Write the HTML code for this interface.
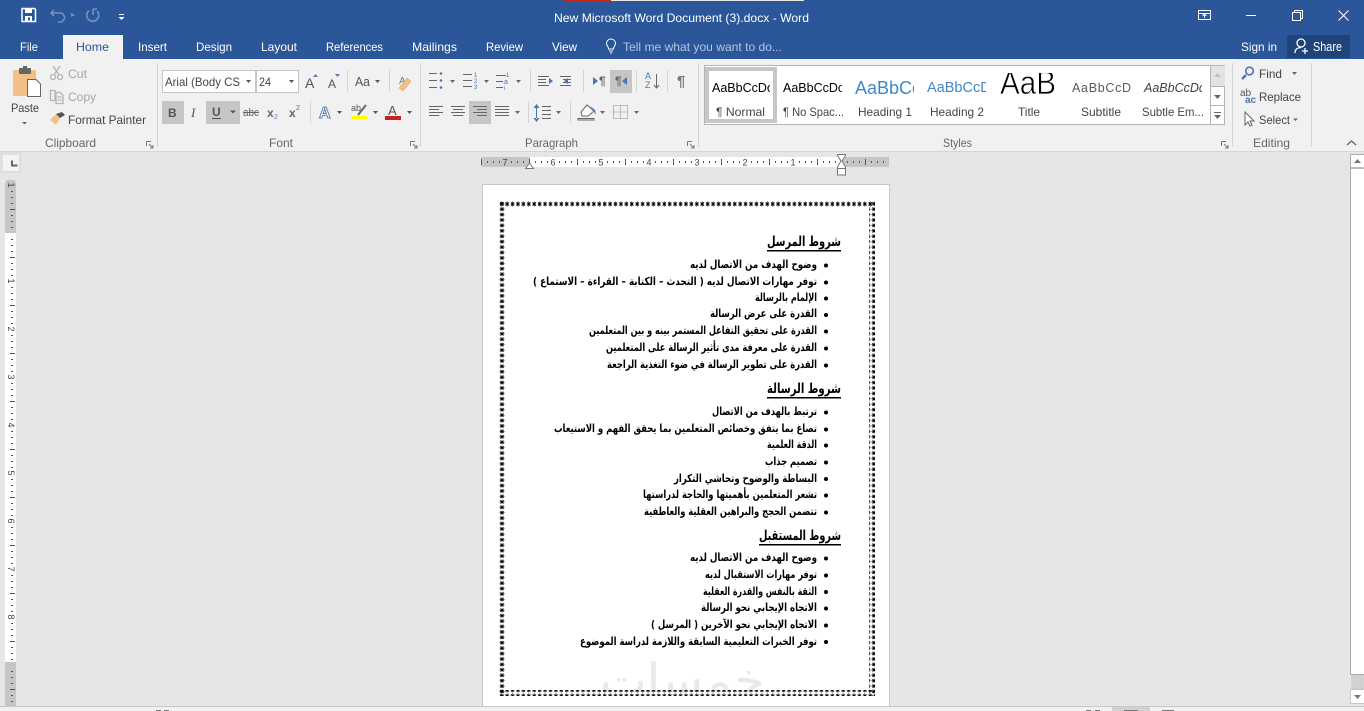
<!DOCTYPE html>
<html lang="en"><head><meta charset="utf-8"><title>New Microsoft Word Document (3).docx - Word</title>
<style>
html,body{margin:0;padding:0;background:#e6e6e6;overflow:hidden}
svg{display:block;position:absolute;left:0;top:0}
text{font-family:"Liberation Sans","DejaVu Sans",sans-serif;font-size:12px;fill:#444;white-space:pre}
.w{fill:#fff}
.g{fill:#a5a5a5}
.s{fill:#666;font-size:12px}
.ar{font-family:"DejaVu Sans","Liberation Sans",sans-serif;font-size:11px;font-weight:bold;fill:#000;direction:rtl}
.h{font-family:"DejaVu Sans","Liberation Sans",sans-serif;font-size:14px;font-weight:bold;fill:#000;direction:rtl}
.r{font-size:9px;fill:#444}
</style></head><body>
<svg width="1364" height="711" viewBox="0 0 1364 711" xmlns="http://www.w3.org/2000/svg">
<defs>
<pattern id="hr" x="793" y="157" width="48" height="10" patternUnits="userSpaceOnUse">
<g fill="#555"><rect x="6" y="4" width="1" height="2"/><rect x="12" y="4" width="1" height="2"/><rect x="18" y="4" width="1" height="2"/><rect x="24" y="2" width="1" height="6"/><rect x="30" y="4" width="1" height="2"/><rect x="36" y="4" width="1" height="2"/><rect x="42" y="4" width="1" height="2"/></g>
</pattern>
<pattern id="vr" x="5" y="233" width="11" height="48" patternUnits="userSpaceOnUse">
<g fill="#555"><rect x="6" y="6" width="2" height="1"/><rect x="6" y="12" width="2" height="1"/><rect x="6" y="18" width="2" height="1"/><rect x="5" y="24" width="5" height="1"/><rect x="6" y="30" width="2" height="1"/><rect x="6" y="36" width="2" height="1"/><rect x="6" y="42" width="2" height="1"/></g>
</pattern>
<pattern id="sx" x="499" y="201" width="5.42" height="6" patternUnits="userSpaceOnUse">
<path d="M2.700 .5V5.500M.8 3H4.600M1.100 1.200L4.300 4.800M4.300 1.200L1.100 4.800" stroke="#000" stroke-width=".75" fill="none"/>
</pattern>
<pattern id="sy" x="499" y="201" width="6" height="5.42" patternUnits="userSpaceOnUse">
<path d="M3 .7V4.700M.5 2.700H5.500M1.200 1.100L4.800 4.300M4.800 1.100L1.200 4.300" stroke="#000" stroke-width=".75" fill="none"/>
</pattern>
<pattern id="dots" width="2" height="2" patternUnits="userSpaceOnUse"><rect width="2" height="2" fill="#d4d4d4"/><rect width="1" height="1" fill="#c8c8c8"/></pattern>
<clipPath id="c1"><rect x="710" y="74" width="60" height="30"/></clipPath>
<clipPath id="c2"><rect x="782" y="74" width="60" height="30"/></clipPath>
<clipPath id="c3"><rect x="855" y="74" width="59" height="30"/></clipPath>
<clipPath id="c4"><rect x="927" y="74" width="59" height="30"/></clipPath>
<clipPath id="c5"><rect x="995" y="73" width="66" height="30"/></clipPath>
<clipPath id="c6"><rect x="1071" y="74" width="60" height="30"/></clipPath>
<clipPath id="c7"><rect x="1143" y="74" width="59" height="30"/></clipPath>
<clipPath id="wm"><rect x="590" y="655" width="190" height="37"/></clipPath>
</defs>

<!-- backgrounds -->
<rect width="1364" height="711" fill="#e6e6e6"/>
<rect width="1364" height="59" fill="#2b579a"/>
<rect y="59" width="1364" height="92" fill="#f1f1f1"/>
<rect y="151" width="1364" height="1" fill="#d4d4d4"/>
<rect x="563" y="0" width="48" height="1" fill="#c8281c"/>
<rect x="611" y="0" width="193" height="1" fill="#e8e8e8"/>

<!-- quick access -->
<g fill="none">
<path d="M22 8.500H34.500L35.500 9.500V21.500H22Z" stroke="#fff" stroke-width="1.500"/>
<rect x="25" y="8" width="7" height="5" fill="#fff"/><rect x="25" y="16" width="7" height="5.500" fill="#fff"/><rect x="28" y="17.500" width="2" height="3" fill="#2b579a"/>
<path d="M54 10L51 13L54 16M51.500 13H60A4.500 4.500 0 0 1 60 22H58" stroke="#7893bd" stroke-width="1.500"/>
<path d="M71 13L75 15L71 17Z" fill="#7893bd"/>
<path d="M89 10.500A6 6 0 1 0 97 11M93 9V15M93 9H97" stroke="#7893bd" stroke-width="1.600"/>
<path d="M119 14.500H124" stroke="#fff"/><path d="M118.500 17H124.500L121.500 20Z" fill="#fff"/>
</g>

<text class="w" x="554" y="22" textLength="255" lengthAdjust="spacingAndGlyphs">New Microsoft Word Document (3).docx - Word</text>

<!-- window buttons -->
<g fill="none" stroke="#fff">
<rect x="1198.500" y="10.500" width="12" height="9"/><path d="M1198.500 13.500H1210.500M1204.500 18V14.500M1202.500 16L1204.500 14L1206.500 16"/>
<path d="M1246 15.500H1256"/>
<rect x="1292.500" y="12.500" width="8" height="8"/><path d="M1294.500 12.500V10.500H1302.500V18.500H1300.500"/>
<path d="M1338.500 10.500L1348.500 20.500M1348.500 10.500L1338.500 20.500"/>
</g>

<!-- tabs -->
<rect x="63" y="35" width="60" height="24" fill="#f1f1f1"/>
<text class="w" x="20" y="51" textLength="18" lengthAdjust="spacingAndGlyphs">File</text>
<text x="76" y="51" textLength="33" lengthAdjust="spacingAndGlyphs" style="fill:#2b579a">Home</text>
<text class="w" x="138" y="51" textLength="29" lengthAdjust="spacingAndGlyphs">Insert</text>
<text class="w" x="196" y="51" textLength="36" lengthAdjust="spacingAndGlyphs">Design</text>
<text class="w" x="261" y="51" textLength="36" lengthAdjust="spacingAndGlyphs">Layout</text>
<text class="w" x="326" y="51" textLength="57" lengthAdjust="spacingAndGlyphs">References</text>
<text class="w" x="412" y="51" textLength="45" lengthAdjust="spacingAndGlyphs">Mailings</text>
<text class="w" x="486" y="51" textLength="37" lengthAdjust="spacingAndGlyphs">Review</text>
<text class="w" x="552" y="51" textLength="25" lengthAdjust="spacingAndGlyphs">View</text>
<path d="M608.500 49C608.500 46 606.500 46 606.500 43.500A4.500 4.500 0 0 1 615.500 43.500C615.500 46 613.500 46 613.500 49ZM609 51H613M610 53H612" fill="none" stroke="#fff"/>
<text x="623" y="51" textLength="159" lengthAdjust="spacingAndGlyphs" style="fill:#b4c6e0">Tell me what you want to do...</text>
<text class="w" x="1241" y="51" textLength="36" lengthAdjust="spacingAndGlyphs">Sign in</text>
<rect x="1287" y="35" width="63" height="23" fill="#1f4479"/>
<circle cx="1301" cy="43" r="4" fill="none" stroke="#fff" stroke-width="1.300"/>
<path d="M1295 53C1295 49 1298 47.500 1301 47.500M1302 51H1308M1305 48V54" fill="none" stroke="#fff" stroke-width="1.300"/>
<text class="w" x="1313" y="51" textLength="29" lengthAdjust="spacingAndGlyphs" style="font-size:13px">Share</text>

<!-- group separators -->
<g fill="#d4d4d4">
<rect x="157" y="63" width="1" height="84"/><rect x="420" y="63" width="1" height="84"/><rect x="698" y="63" width="1" height="84"/><rect x="1232" y="63" width="1" height="84"/><rect x="1311" y="63" width="1" height="84"/>
</g>

<!-- clipboard -->
<rect x="13" y="70" width="23" height="26" rx="1" fill="#f2bf84"/>
<rect x="19" y="68" width="12" height="6" rx="1" fill="#666"/><rect x="23" y="66" width="4" height="4" fill="#666"/>
<path d="M27.500 79.500H36L40.500 84V96.500H27.500Z" fill="#fff" stroke="#666"/>
<text x="11" y="112" textLength="28" lengthAdjust="spacingAndGlyphs">Paste</text>
<path d="M22 122H27L24.500 124.500Z" fill="#666"/>
<g fill="none" stroke="#b3b3b3" stroke-width="1.300"><circle cx="53" cy="77" r="2.500"/><circle cx="60" cy="77" r="2.500"/><path d="M54 75L60 66M59 75L53 66"/>
<path d="M50.500 90.500H55V100.500H50.500ZM56 92.500H60L63 95V103.500H56ZM57.500 97H61.500M57.500 100H61.500"/></g>
<text x="68" y="78" textLength="19" lengthAdjust="spacingAndGlyphs" class="g">Cut</text>
<text x="68" y="101" textLength="28" lengthAdjust="spacingAndGlyphs" class="g">Copy</text>
<path d="M50 120L56 114L60 118L56 125Z" fill="#f2bf84"/><path d="M56 114L62 112L65 115L60 118Z" fill="#555"/>
<text x="68" y="124" textLength="78" lengthAdjust="spacingAndGlyphs">Format Painter</text>
<text class="s" x="45" y="147" textLength="51" lengthAdjust="spacingAndGlyphs">Clipboard</text>
<path d="M146.500 141.500H151M146.500 141.500V146M149 144L153 148M153 145V148H150" fill="none" stroke="#777"/>

<!-- font -->
<rect x="162.500" y="70.500" width="93" height="22" fill="#fff" stroke="#c6c6c6"/>
<rect x="256.500" y="70.500" width="42" height="22" fill="#fff" stroke="#c6c6c6"/>
<text x="165" y="86" textLength="75" lengthAdjust="spacingAndGlyphs">Arial (Body CS</text>
<text x="259" y="86" textLength="12" lengthAdjust="spacingAndGlyphs">24</text>
<path d="M246 80H251L248.500 83ZM289 80H294L291.500 83Z" fill="#555"/>
<text x="305" y="88" style="font-size:14px;fill:#555">A</text><path d="M313 77H318L315.500 74Z" fill="#5b7fb5"/>
<text x="328" y="88" style="font-size:12px;fill:#555">A</text><path d="M335 74H340L337.500 77Z" fill="#5b7fb5"/>
<rect x="347" y="70" width="1" height="22" fill="#d4d4d4"/>
<text x="355" y="86" textLength="15" lengthAdjust="spacingAndGlyphs" style="font-size:13px;fill:#555">Aa</text>
<path d="M375 80H380L377.500 83Z" fill="#555"/>
<rect x="389" y="70" width="1" height="22" fill="#d4d4d4"/>
<text x="399" y="84" style="font-size:10px;fill:#777">A</text>
<path d="M399 88L407 78L411 81L403 91Z" fill="#f2bf84" stroke="#c89a66" stroke-width=".5"/>
<rect x="162" y="101" width="22" height="23" fill="#c6c6c6"/>
<rect x="206" y="101" width="34" height="23" fill="#c6c6c6"/>
<text x="168" y="117" style="font-weight:bold;font-size:12px;fill:#555">B</text>
<text x="191" y="117" style="font-style:italic;font-family:'Liberation Serif',serif;font-size:13px;fill:#555">I</text>
<text x="212" y="116" style="font-size:12px;font-weight:bold;fill:#555">U</text><rect x="212" y="118" width="9" height="1" fill="#555"/>
<path d="M230 110.500H236L233 113.500Z" fill="#555"/>
<text x="243" y="116" textLength="16" lengthAdjust="spacingAndGlyphs" style="font-size:11px;fill:#666">abc</text><rect x="243" y="112" width="16" height="1" fill="#666"/>
<text x="267" y="117" style="font-weight:bold;font-size:12px;fill:#666">x</text><text x="274" y="119" style="font-size:7px;fill:#5b7fb5">2</text>
<text x="289" y="117" style="font-weight:bold;font-size:12px;fill:#666">x</text><text x="296" y="110" style="font-size:7px;fill:#666">2</text>
<rect x="310" y="101" width="1" height="22" fill="#d4d4d4"/>
<text x="319" y="118" style="font-weight:bold;font-size:16px;fill:#fff;stroke:#5b7fb5;stroke-width:1">A</text>
<path d="M337 111H342L339.500 114Z" fill="#555"/>
<text x="351" y="111" style="font-size:9px;fill:#555">ab</text><path d="M358 115L366 105" stroke="#666" stroke-width="2"/>
<rect x="351" y="116" width="16" height="3" fill="#ff0"/>
<path d="M373 111H378L375.500 114Z" fill="#555"/>
<text x="388" y="115" style="font-size:13px;fill:#555">A</text><rect x="385" y="116" width="16" height="4" fill="#c8221a"/>
<path d="M407 111H412L409.500 114Z" fill="#555"/>
<text class="s" x="269" y="147" textLength="24" lengthAdjust="spacingAndGlyphs">Font</text>
<path d="M410.500 141.500H415M410.500 141.500V146M413 144L417 148M417 145V148H414" fill="none" stroke="#777"/>

<!-- paragraph -->
<rect x="610" y="70" width="22" height="23" fill="#c6c6c6"/>
<rect x="469" y="101" width="22" height="23" fill="#c6c6c6"/>
<g fill="none" stroke="#666">
<path d="M429 73.500H437M429 80.500H437M429 87.500H437"/>
<path d="M463 74.500H472M463 80.500H472M463 86.500H472"/>
<path d="M496 75.500H506M496 81.500H503M496 87.500H503"/>
<path d="M538 76.500H549M538 79.500H546M538 82.500H546M538 85.500H549"/>
<path d="M560 76.500H571M563 79.500H571M563 82.500H571M560 85.500H571"/>
<path d="M429 106.500H443M429 109.500H439M429 112.500H443M429 115.500H439"/>
<path d="M451 106.500H465M453 109.500H463M451 112.500H465M453 115.500H463"/>
<path d="M473 106.500H487M477 109.500H487M473 112.500H487M477 115.500H487"/>
<path d="M495 106.500H509M495 109.500H509M495 112.500H509M495 115.500H509"/>
<path d="M542 106.500H551M542 110.500H551M542 114.500H551M542 118.500H551"/>
<path d="M578 118.500H594V120H578Z"/>
<path d="M613.500 105.500H627.500V118.500H613.500ZM620.500 105.500V118.500M613.500 112H627.500" stroke="#888" stroke-dasharray="1 1"/>
</g>
<path d="M450 80H455L452.500 83ZM484 80H489L486.500 83ZM516 80H521L518.500 83ZM515 111H520L517.500 114ZM556 111H561L558.500 114ZM600 111H605L602.500 114ZM634 111H639L636.500 114Z" fill="#666"/>
<g fill="#4a74b2">
<circle cx="441" cy="73.500" r="1.300"/><circle cx="441" cy="80.500" r="1.300"/><circle cx="441" cy="87.500" r="1.300"/>
<path d="M549 78L553 81L549 84ZM564 81L568 78V84Z"/>
<path d="M593 77L598 81L593 85ZM622 81L627 77V85Z"/>
<path d="M536.500 104L539.500 108H533.500ZM536.500 122L539.500 118H533.500ZM536 107H537V119H536Z"/>
</g>
<text x="474" y="77" style="font-size:6px;fill:#4a74b2">1</text><text x="474" y="83" style="font-size:6px;fill:#4a74b2">2</text><text x="474" y="89" style="font-size:6px;fill:#4a74b2">3</text>
<text x="506" y="77" style="font-size:6px;fill:#4a74b2">1</text><text x="504" y="84" style="font-size:7px;fill:#4a74b2">a</text><text x="504" y="90" style="font-size:6px;fill:#4a74b2">i</text>
<text x="599" y="85" style="font-size:12px;font-weight:bold;fill:#666">¶</text>
<text x="615" y="85" style="font-size:12px;font-weight:bold;fill:#666">¶</text>
<text x="645" y="79" style="font-size:9px;fill:#4a74b2">A</text><text x="645" y="88" style="font-size:9px;fill:#777">Z</text>
<path d="M656.500 74V88M654 85L656.500 88L659 85" fill="none" stroke="#666"/>
<text x="677" y="86" style="font-size:15px;font-weight:bold;fill:#777">¶</text>
<g fill="#d4d4d4"><rect x="530" y="70" width="1" height="22"/><rect x="583" y="70" width="1" height="22"/><rect x="636" y="70" width="1" height="22"/><rect x="667" y="70" width="1" height="22"/><rect x="528" y="101" width="1" height="22"/><rect x="570" y="101" width="1" height="22"/></g>
<path d="M581 112L587 105L594 111L588 116H582Z" fill="#fff" stroke="#666"/><path d="M590 106L595 110L596 115Z" fill="#4a74b2"/>
<text class="s" x="525" y="147" textLength="53" lengthAdjust="spacingAndGlyphs">Paragraph</text>
<path d="M687.500 141.500H692M687.500 141.500V146M690 144L694 148M694 145V148H691" fill="none" stroke="#777"/>

<!-- styles gallery -->
<rect x="704.500" y="65.500" width="520" height="59" fill="#fff" stroke="#b5b5b5"/>
<rect x="707" y="69" width="68" height="52" fill="#fff" stroke="#c6c6c6" stroke-width="4"/>
<g clip-path="url(#c1)"><text x="712" y="92" style="font-size:12.500px;fill:#000">AaBbCcDc</text></g>
<g clip-path="url(#c2)"><text x="783" y="92" style="font-size:12.500px;fill:#000">AaBbCcDc</text></g>
<g clip-path="url(#c3)"><text x="855" y="94" style="font-size:18px;fill:#3f88c8">AaBbCc</text></g>
<g clip-path="url(#c4)"><text x="927" y="92" style="font-size:14.500px;fill:#3f88c8">AaBbCcD</text></g>
<g clip-path="url(#c5)"><text x="1000" y="94" textLength="56" lengthAdjust="spacingAndGlyphs" style="font-size:33px;fill:#000;stroke:#fff;stroke-width:.7">AaB</text></g>
<g clip-path="url(#c6)"><text x="1072" y="92" style="font-size:12.500px;letter-spacing:.7px;fill:#5a5a5a">AaBbCcD</text></g>
<g clip-path="url(#c7)"><text x="1144" y="92" style="font-size:12.500px;font-style:italic;fill:#404040">AaBbCcDc</text></g>
<text x="716" y="116" textLength="49" lengthAdjust="spacingAndGlyphs">¶ Normal</text>
<text x="783" y="116" textLength="61" lengthAdjust="spacingAndGlyphs">¶ No Spac...</text>
<text x="858" y="116" textLength="54" lengthAdjust="spacingAndGlyphs">Heading 1</text>
<text x="930" y="116" textLength="54" lengthAdjust="spacingAndGlyphs">Heading 2</text>
<text x="1018" y="116" textLength="22" lengthAdjust="spacingAndGlyphs">Title</text>
<text x="1081" y="116" textLength="40" lengthAdjust="spacingAndGlyphs">Subtitle</text>
<text x="1142" y="116" textLength="62" lengthAdjust="spacingAndGlyphs">Subtle Em...</text>
<rect x="1210.500" y="65.500" width="14" height="59" fill="#fff" stroke="#b5b5b5"/>
<rect x="1211" y="66" width="14" height="20" fill="#e3e3e3"/>
<path d="M1210.500 86.500H1224.500M1210.500 105.500H1224.500" stroke="#b5b5b5"/>
<path d="M1214 77H1221L1217.500 73Z" fill="#c0c0c0"/>
<path d="M1214 95H1221L1217.500 99Z" fill="#666"/>
<path d="M1214 112.500H1221" stroke="#666"/><path d="M1214 115H1221L1217.500 119Z" fill="#666"/>
<text class="s" x="943" y="147" textLength="29" lengthAdjust="spacingAndGlyphs">Styles</text>
<path d="M1221.500 141.500H1226M1221.500 141.500V146M1224 144L1228 148M1228 145V148H1225" fill="none" stroke="#777"/>

<!-- editing -->
<circle cx="1249.500" cy="71" r="3.800" fill="none" stroke="#4a74b2" stroke-width="1.600"/>
<path d="M1246 75L1242 79" stroke="#4a74b2" stroke-width="2.400"/>
<text x="1259" y="78" textLength="23" lengthAdjust="spacingAndGlyphs">Find</text>
<path d="M1292 72H1297L1294.500 75Z" fill="#666"/>
<text x="1240" y="96" style="font-size:10px;fill:#555">ab</text><text x="1245" y="103" style="font-size:10px;font-weight:bold;fill:#4a74b2">ac</text>
<text x="1259" y="101" textLength="42" lengthAdjust="spacingAndGlyphs">Replace</text>
<path d="M1245 112V125L1248 122L1250 126L1252 125L1250 121H1254Z" fill="#fff" stroke="#666"/>
<text x="1259" y="124" textLength="31" lengthAdjust="spacingAndGlyphs">Select</text>
<path d="M1293 118.500H1298L1295.500 121Z" fill="#666"/>
<text class="s" x="1253" y="147" textLength="37" lengthAdjust="spacingAndGlyphs">Editing</text>
<path d="M1347 145L1351.500 141L1356 145" fill="none" stroke="#666" stroke-width="1.300"/>

<!-- horizontal ruler -->
<rect x="481" y="157" width="408" height="10" fill="#c6c6c6"/>
<rect x="530" y="157" width="311" height="10" fill="#fff"/>
<rect x="481" y="157" width="408" height="10" fill="url(#hr)"/>
<rect x="501" y="158" width="8" height="8" fill="#c6c6c6"/><rect x="549" y="158" width="8" height="8" fill="#fff"/><rect x="597" y="158" width="8" height="8" fill="#fff"/><rect x="645" y="158" width="8" height="8" fill="#fff"/><rect x="693" y="158" width="8" height="8" fill="#fff"/><rect x="741" y="158" width="8" height="8" fill="#fff"/><rect x="789" y="158" width="8" height="8" fill="#fff"/>
<text class="r" x="505" y="165.500" text-anchor="middle">7</text><text class="r" x="553" y="165.500" text-anchor="middle">6</text><text class="r" x="601" y="165.500" text-anchor="middle">5</text><text class="r" x="649" y="165.500" text-anchor="middle">4</text><text class="r" x="697" y="165.500" text-anchor="middle">3</text><text class="r" x="745" y="165.500" text-anchor="middle">2</text><text class="r" x="793" y="165.500" text-anchor="middle">1</text>
<path d="M525.500 168.500L529.500 163L533.500 168.500Z" fill="#fff" stroke="#777"/>
<path d="M837.500 154.500H845.500V155.500L842 161L845.500 167V168.500H837.500V167L841 161L837.500 155.500Z" fill="#fff" stroke="#777"/>
<rect x="837.500" y="168.500" width="8" height="6.500" fill="#fff" stroke="#777"/>

<!-- ruler corner -->
<rect x="0" y="152" width="22" height="21" fill="#dfdfdf"/>
<rect x="3" y="155" width="16" height="16" fill="#f4f4f4"/>
<path d="M12 160.500V165.500H17.500" fill="none" stroke="#666" stroke-width="2"/>

<!-- vertical ruler -->
<rect x="5" y="182" width="11" height="524" fill="#c6c6c6"/>
<rect x="5" y="233" width="11" height="429" fill="#fff"/>
<rect x="5" y="182" width="11" height="524" fill="url(#vr)"/>
<rect x="6" y="180" width="9" height="8" fill="#c6c6c6"/>
<rect x="6" y="277" width="9" height="7" fill="#fff"/><rect x="6" y="325" width="9" height="7" fill="#fff"/><rect x="6" y="373" width="9" height="7" fill="#fff"/><rect x="6" y="421" width="9" height="7" fill="#fff"/><rect x="6" y="469" width="9" height="7" fill="#fff"/><rect x="6" y="517" width="9" height="7" fill="#fff"/><rect x="6" y="565" width="9" height="7" fill="#fff"/><rect x="6" y="613" width="9" height="7" fill="#fff"/>
<text class="r" text-anchor="middle" transform="translate(8,185) rotate(90)">1</text>
<text class="r" text-anchor="middle" transform="translate(8,281) rotate(90)">1</text>
<text class="r" text-anchor="middle" transform="translate(8,329) rotate(90)">2</text>
<text class="r" text-anchor="middle" transform="translate(8,377) rotate(90)">3</text>
<text class="r" text-anchor="middle" transform="translate(8,425) rotate(90)">4</text>
<text class="r" text-anchor="middle" transform="translate(8,473) rotate(90)">5</text>
<text class="r" text-anchor="middle" transform="translate(8,521) rotate(90)">6</text>
<text class="r" text-anchor="middle" transform="translate(8,569) rotate(90)">7</text>
<text class="r" text-anchor="middle" transform="translate(8,617) rotate(90)">8</text>

<!-- scrollbar -->
<rect x="1350.500" y="154.500" width="14" height="520" fill="#fff" stroke="#ababab"/>
<path d="M1354 163H1361L1357.500 159Z" fill="#777"/>
<rect x="1351" y="167" width="13" height="2" fill="#bdbdbd"/>
<rect x="1351" y="675" width="13" height="14" fill="url(#dots)"/>
<rect x="1350.500" y="689.500" width="14" height="14" fill="#fff" stroke="#c6c6c6"/>
<path d="M1354 695H1361L1357.500 699Z" fill="#777"/>

<!-- page -->
<rect x="482.500" y="184.500" width="407" height="530" fill="#fff" stroke="#c6c6c6"/>
<g clip-path="url(#wm)"><text x="765" y="696" textLength="165" lengthAdjust="spacingAndGlyphs" style="font-family:'DejaVu Sans',sans-serif;font-size:46px;fill:#e9e9e9;direction:rtl">خمسات</text></g>
<rect x="499" y="201" width="376" height="6" fill="url(#sx)"/>
<rect x="499" y="690" width="376" height="6" fill="url(#sx)"/>
<rect x="499" y="201" width="6" height="495" fill="url(#sy)"/>
<rect x="869" y="201" width="6" height="495" fill="url(#sy)"/>

<!-- doc text -->
<text class="h" x="841" y="246" textLength="74" lengthAdjust="spacingAndGlyphs">شروط المرسل</text><rect x="767" y="250" width="74" height="1.500" fill="#000"/>
<text class="ar" x="817" y="268" textLength="127" lengthAdjust="spacingAndGlyphs">وضوح الهدف من الاتصال لديه</text>
<text class="ar" x="817" y="285" textLength="284" lengthAdjust="spacingAndGlyphs">توفر مهارات الاتصال لديه ( التحدث – الكتابة – القراءة – الاستماع )</text>
<text class="ar" x="817" y="301" textLength="62" lengthAdjust="spacingAndGlyphs">الإلمام بالرسالة</text>
<text class="ar" x="817" y="317" textLength="107" lengthAdjust="spacingAndGlyphs">القدرة على عرض الرسالة</text>
<text class="ar" x="817" y="334" textLength="228" lengthAdjust="spacingAndGlyphs">القدرة على تحقيق التفاعل المستمر بينه و بين المتعلمين</text>
<text class="ar" x="817" y="351" textLength="211" lengthAdjust="spacingAndGlyphs">القدرة على معرفة مدى تأثير الرسالة على المتعلمين</text>
<text class="ar" x="817" y="368" textLength="210" lengthAdjust="spacingAndGlyphs">القدرة على تطوير الرسالة في ضوء التغذية الراجعة</text>

<text class="h" x="841" y="393" textLength="74" lengthAdjust="spacingAndGlyphs">شروط الرسالة</text><rect x="767" y="397" width="74" height="1.500" fill="#000"/>
<text class="ar" x="817" y="415" textLength="105" lengthAdjust="spacingAndGlyphs">ترتبط بالهدف من الاتصال</text>
<text class="ar" x="817" y="432" textLength="263" lengthAdjust="spacingAndGlyphs">تصاغ بما يتفق وخصائص المتعلمين بما يحقق الفهم و الاستيعاب</text>
<text class="ar" x="817" y="448" textLength="50" lengthAdjust="spacingAndGlyphs">الدقة العلمية</text>
<text class="ar" x="817" y="465" textLength="52" lengthAdjust="spacingAndGlyphs">تصميم جذاب</text>
<text class="ar" x="817" y="482" textLength="143" lengthAdjust="spacingAndGlyphs">البساطة والوضوح وتحاشي التكرار</text>
<text class="ar" x="817" y="498" textLength="174" lengthAdjust="spacingAndGlyphs">تشعر المتعلمين بأهميتها والحاجة لدراستها</text>
<text class="ar" x="817" y="515" textLength="173" lengthAdjust="spacingAndGlyphs">تتضمن الحجج والبراهين العقلية والعاطفية</text>

<text class="h" x="841" y="540" textLength="82" lengthAdjust="spacingAndGlyphs">شروط المستقبل</text><rect x="759" y="544" width="82" height="1.500" fill="#000"/>
<text class="ar" x="817" y="561" textLength="127" lengthAdjust="spacingAndGlyphs">وضوح الهدف من الاتصال لديه</text>
<text class="ar" x="817" y="578" textLength="112" lengthAdjust="spacingAndGlyphs">توفر مهارات الاستقبال لديه</text>
<text class="ar" x="817" y="595" textLength="114" lengthAdjust="spacingAndGlyphs">الثقة بالنفس والقدرة العقلية</text>
<text class="ar" x="817" y="611" textLength="116" lengthAdjust="spacingAndGlyphs">الاتجاه الإيجابي نحو الرسالة</text>
<text class="ar" x="817" y="628" textLength="166" lengthAdjust="spacingAndGlyphs">الاتجاه الإيجابي نحو الآخرين ( المرسل )</text>
<text class="ar" x="817" y="645" textLength="237" lengthAdjust="spacingAndGlyphs">توفر الخبرات التعليمية السابقة واللازمة لدراسة الموضوع</text>

<g fill="#000">
<circle cx="826" cy="265.500" r="2"/><circle cx="826" cy="282.500" r="2"/><circle cx="826" cy="298.500" r="2"/><circle cx="826" cy="315" r="2"/><circle cx="826" cy="331.500" r="2"/><circle cx="826" cy="348.500" r="2"/><circle cx="826" cy="365.500" r="2"/>
<circle cx="826" cy="412.500" r="2"/><circle cx="826" cy="429.500" r="2"/><circle cx="826" cy="445.500" r="2"/><circle cx="826" cy="462.500" r="2"/><circle cx="826" cy="479" r="2"/><circle cx="826" cy="495.500" r="2"/><circle cx="826" cy="512.500" r="2"/>
<circle cx="826" cy="558.500" r="2"/><circle cx="826" cy="575.500" r="2"/><circle cx="826" cy="592" r="2"/><circle cx="826" cy="608.500" r="2"/><circle cx="826" cy="625.500" r="2"/><circle cx="826" cy="642" r="2"/>
</g>

<!-- status bar -->
<rect x="0" y="706" width="1364" height="5" fill="#f1f1f1"/>
<rect x="0" y="706" width="1364" height="1" fill="#c6c6c6"/>
<rect x="1112" y="707" width="38" height="4" fill="url(#dots)"/>
<g fill="#777"><rect x="156" y="710" width="5" height="1"/><rect x="164" y="710" width="5" height="1"/><rect x="1086" y="710" width="5" height="1"/><rect x="1095" y="710" width="5" height="1"/><rect x="1124" y="710" width="14" height="1"/><rect x="1162" y="710" width="12" height="1"/></g>
</svg>
</body></html>
